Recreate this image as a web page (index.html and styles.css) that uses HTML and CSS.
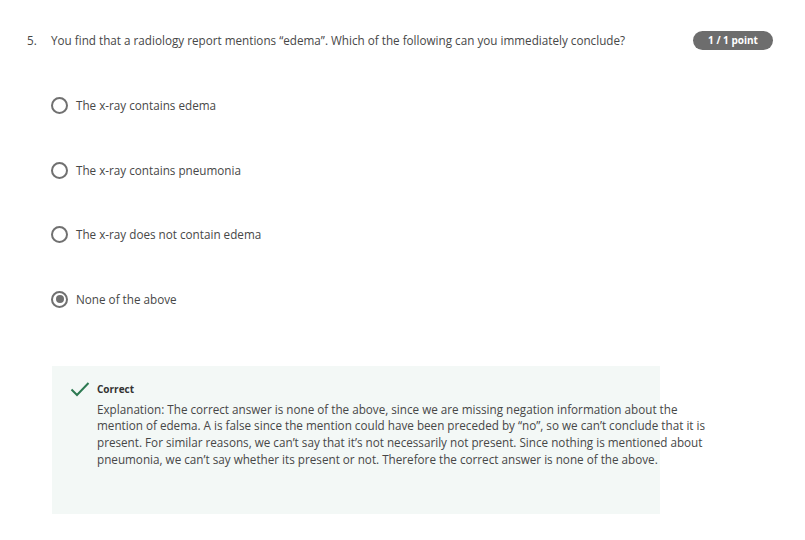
FILE: index.html
```html
<!DOCTYPE html>
<html>
<head>
<meta charset="utf-8">
<link rel="stylesheet" href="styles.css">
</head>
<body>
<div class="quiz">
  <div class="qhead">
    <span class="qnum">5.</span>
    <span class="qtext">You find that a radiology report mentions “edema”. Which of the following can you immediately conclude?</span>
    <span class="badge">1 / 1 point</span>
  </div>
  <div class="options">
    <div class="opt"><span class="radio"></span><span>The x-ray contains edema</span></div>
    <div class="opt"><span class="radio"></span><span>The x-ray contains pneumonia</span></div>
    <div class="opt"><span class="radio"></span><span>The x-ray does not contain edema</span></div>
    <div class="opt"><span class="radio checked"></span><span>None of the above</span></div>
  </div>
  <div class="feedback">
    <svg class="check" width="20" height="16" viewBox="0 0 20 16"><path d="M1.5 8.5 L7 14 L18.5 2" fill="none" stroke="#2d7a52" stroke-width="2"/></svg>
    <div class="fbody">
      <div class="fhead">Correct</div>
      <p>Explanation: The correct answer is none of the above, since we are missing negation information about the mention of edema. A is false since the mention could have been preceded by “no”, so we can’t conclude that it is present. For similar reasons, we can’t say that it’s not necessarily not present. Since nothing is mentioned about pneumonia, we can’t say whether its present or not. Therefore the correct answer is none of the above.</p>
    </div>
  </div>
</div>
</body>
</html>
```
FILE: styles.css
```css
html, body { margin: 0; padding: 0; background: #fff; }
body { font-family: "Open Sans", "Noto Sans", sans-serif; color: #474747; font-size: 11.7px; }
.quiz { padding: 31px 32px 0 27px; }
.qhead { display: flex; align-items: flex-start; }
.qnum { width: 24px; line-height: 19px; }
.qtext { flex: 1; line-height: 19px; }
.badge { background: #6d6d6d; color: #fff; font-weight: 700; font-size: 10px; border-radius: 10px; height: 19px; line-height: 19px; width: 80px; text-align: center; margin-left: 20px; flex: none; }
.options { display: flex; flex-direction: column; gap: 45.5px; padding: 46px 0 0 24px; }
.opt { display: flex; align-items: center; gap: 8px; height: 19px; line-height: 19px; }
.radio { width: 13px; height: 13px; border: 2px solid #707070; border-radius: 50%; box-sizing: content-box; position: relative; }
.radio.checked::after { content: ""; position: absolute; left: 2.5px; top: 2.5px; width: 8px; height: 8px; border-radius: 50%; background: #707070; }
.feedback { margin: 57px 113px 0 25px; background: #f3f8f6; height: 148px; display: flex; padding: 15px 0 0 18px; box-sizing: border-box; gap: 7px; }
.check { margin-top: 0; flex: none; }
.fhead { font-weight: 700; font-size: 10px; line-height: 16px; color: #333; }
.fbody { width: 0; flex: 1; }
.fbody p { margin: 4px 0 0; line-height: 16.7px; width: 612px; }
```
